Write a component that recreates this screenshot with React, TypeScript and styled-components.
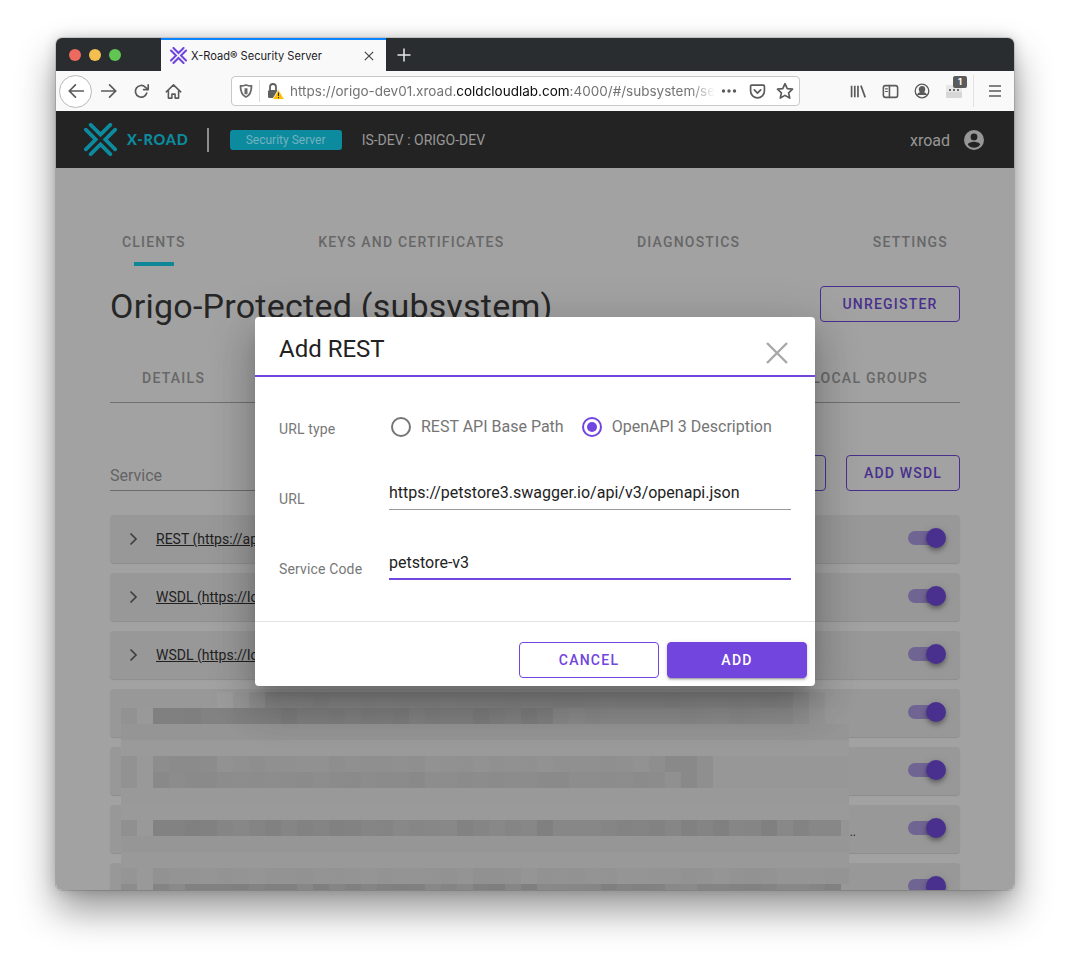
import React from "react";
import styled, { createGlobalStyle } from "styled-components";

const Global = createGlobalStyle`
  html, body { margin: 0; padding: 0; background: #fff; }
  * { box-sizing: border-box; }
  #root { font-family: Roboto, "Liberation Sans", sans-serif; }
`;

const Page = styled.div`
  width: 1070px;
  height: 964px;
  padding: 38px 56px 74px;
  background: #fff;
  overflow: hidden;
`;
const BrowserWindow = styled.div`
  width: 958px;
  height: 852px;
  display: flex;
  flex-direction: column;
  border-radius: 6px;
  overflow: hidden;
  box-shadow: 0 20px 38px rgba(0, 0, 0, 0.42), 0 0 14px rgba(0, 0, 0, 0.18), 0 0 0 1px rgba(0, 0, 0, 0.12);
`;
const TitleBar = styled.div`
  height: 33px;
  flex: none;
  display: flex;
  background: #2a2d30;
`;
const Lights = styled.div`
  width: 105px;
  display: flex;
  align-items: center;
  gap: 8px;
  padding-left: 13px;
`;
const Light = styled.span<{ $c: string }>`
  width: 12px;
  height: 12px;
  border-radius: 50%;
  background: ${(p) => p.$c};
`;
const BrowserTab = styled.div`
  width: 225px;
  display: flex;
  align-items: center;
  padding: 0 12px 0 9px;
  background: #f9f9fa;
  border-top: 2px solid #0a84ff;
  gap: 4px;
`;
const TabTitle = styled.span`
  flex: 1;
  font: 400 11.1px Inter, "Open Sans", sans-serif;
  color: #1c1c1e;
  white-space: nowrap;
`;
const NewTab = styled.div`
  width: 36px;
  display: flex;
  align-items: center;
  justify-content: center;
`;
const Toolbar = styled.div`
  height: 40px;
  flex: none;
  display: flex;
  align-items: center;
  padding-left: 3px;
  background: #f9f9fa;
`;
const BackButton = styled.div`
  width: 33px;
  height: 33px;
  margin-right: 1px;
  display: flex;
  align-items: center;
  justify-content: center;
  border: 1px solid #b9b9b9;
  border-radius: 50%;
  background: #fff;
`;
const Slot = styled.div`
  position: relative;
  width: 32px;
  height: 32px;
  display: flex;
  align-items: center;
  justify-content: center;
  flex: none;
`;
const UrlBar = styled.div`
  width: 569px;
  height: 30px;
  margin: 0 42px 0 42px;
  display: flex;
  align-items: center;
  background: #fff;
  border: 1px solid #c8c8c8;
  border-radius: 4px;
`;
const UrlDivider = styled.span`
  width: 1px;
  height: 22px;
  background: #dcdcdc;
`;
const UrlText = styled.div`
  width: 425px;
  white-space: nowrap;
  font: 400 13.5px Inter, "Open Sans", sans-serif;
  color: #737373;
  -webkit-mask-image: linear-gradient(to right, #000 94%, transparent 100%);
  mask-image: linear-gradient(to right, #000 94%, transparent 100%);
`;
const UrlHost = styled.span`
  color: #0c0c0d;
`;
const UrlIcons = styled.div`
  margin-left: auto;
  display: flex;
  align-items: center;
`;
const UrlIcon = styled.div<{ $w?: number }>`
  width: ${(p) => p.$w ?? 28}px;
  height: 28px;
  display: flex;
  align-items: center;
  justify-content: center;
`;
const ToolSep = styled.span`
  width: 1px;
  height: 32px;
  margin: 0 5px 0 3px;
  background: #e2e2e3;
`;
const Badge = styled.span`
  position: absolute;
  top: 1px;
  right: 3px;
  width: 14px;
  height: 12px;
  border-radius: 2px;
  background: #5b5b5c;
  color: #fff;
  font: 700 9px/12px Inter, sans-serif;
  text-align: center;
`;
const AppHeader = styled.div`
  height: 57px;
  flex: none;
  display: flex;
  align-items: center;
  padding: 0 29px 0 28px;
  background: #232323;
  color: #999;
`;
const Brand = styled.span`
  margin-left: 10px;
  font: 900 14.5px Lato, Inter, sans-serif;
  letter-spacing: 0.8px;
  color: #0c8a9e;
`;
const HeaderDivider = styled.span`
  width: 2px;
  height: 24px;
  margin: 0 21px 0 18px;
  background: #8e8e8e;
`;
const ServerBadge = styled.span`
  width: 112px;
  height: 20px;
  border-radius: 3px;
  background: #0c8a9e;
  color: #73b3bf;
  font-size: 12px;
  line-height: 20px;
  text-align: center;
`;
const Instance = styled.span`
  margin-left: 20px;
  font-size: 14px;
  color: #979797;
`;
const UserName = styled.span`
  margin-left: auto;
  margin-right: 13px;
  padding-top: 1px;
  font-size: 16px;
  color: #979797;
`;
const Content = styled.div`
  position: relative;
  flex: 1;
  min-height: 0;
  overflow: hidden;
  padding: 54px 54px 0;
  background: #fff;
`;
const TabRow = styled.div`
  display: flex;
  justify-content: space-between;
  padding: 0 12px 0 12px;
`;
const MainTab = styled.div<{ $active?: boolean }>`
  position: relative;
  height: 44px;
  font-size: 14px;
  font-weight: 500;
  line-height: 40px;
  letter-spacing: 1.2px;
  color: #9a9a9a;
  ${(p) =>
    p.$active &&
    `&::after { content: ""; position: absolute; left: 12px; bottom: 0; width: 40px; height: 4px; background: #00d0ee; }`}
`;
const TitleRow = styled.div`
  display: flex;
  justify-content: space-between;
  margin-top: 20px;
  height: 40px;
`;
const Title = styled.h1`
  margin: 0;
  font-size: 34px;
  font-weight: 400;
  line-height: 40px;
  letter-spacing: 0.25px;
  color: #2a2a2a;
`;
const OutlineButton = styled.button<{ $w: number }>`
  width: ${(p) => p.$w}px;
  height: 36px;
  padding: 0;
  border: 1px solid #663cdc;
  border-radius: 4px;
  background: transparent;
  color: #663cdc;
  font-family: inherit;
  font-size: 14px;
  font-weight: 500;
  letter-spacing: 1.2px;
`;
const SubTabs = styled.div`
  display: flex;
  justify-content: space-between;
  height: 49px;
  margin-top: 28px;
  padding: 0 32px;
  border-bottom: 1px solid #aaa;
`;
const SubTab = styled.div`
  font-size: 14px;
  font-weight: 500;
  line-height: 48px;
  letter-spacing: 1.25px;
  color: #9a9a9a;
`;
const FilterRow = styled.div`
  display: flex;
  align-items: flex-end;
  gap: 20px;
  margin-top: 52px;
`;
const Filter = styled.div`
  width: 260px;
  height: 36px;
  margin-right: auto;
  padding-top: 10px;
  border-bottom: 1px solid #a0a0a0;
  font-size: 16px;
  line-height: 22px;
  color: #939393;
`;
const Rows = styled.div`
  display: flex;
  flex-direction: column;
  gap: 10px;
  margin-top: 24px;
`;
const Row = styled.div`
  flex: none;
  height: 48px;
  display: flex;
  align-items: center;
  padding: 0 16px 0 19px;
  border-radius: 4px;
  background: #eee;
  box-shadow: 0 1px 1px rgba(0, 0, 0, 0.14);
`;
const RowLink = styled.span`
  margin-left: 18px;
  font-size: 14px;
  color: #222;
  text-decoration: underline;
  white-space: nowrap;
`;
const Ellipsis = styled.span`
  margin: 6px 52px 0 auto;
  font-size: 12px;
  color: #222;
`;
const Toggle = styled.span<{ $auto?: boolean }>`
  position: relative;
  width: 36px;
  height: 14px;
  margin-left: ${(p) => (p.$auto ? "auto" : "0")};
  margin-top: -2px;
  border-radius: 7px;
  background: rgba(102, 60, 220, 0.5);
`;
const Knob = styled.span`
  position: absolute;
  top: -3px;
  right: -2px;
  width: 20px;
  height: 20px;
  border-radius: 50%;
  background: #663cdc;
  box-shadow: 0 2px 4px -1px rgba(0, 0, 0, 0.3), 0 4px 5px rgba(0, 0, 0, 0.16), 0 1px 10px rgba(0, 0, 0, 0.14);
`;
const Scrim = styled.div`
  position: absolute;
  inset: 0;
  background: rgba(33, 33, 33, 0.42);
`;
const Mosaic = styled.svg`
  position: absolute;
  left: 65px;
  top: 524px;
`;
const Dialog = styled.div`
  position: absolute;
  left: 199px;
  top: 149px;
  width: 560px;
  height: 369px;
  border-radius: 4px;
  background: #fff;
  box-shadow: 0 11px 15px -7px rgba(0, 0, 0, 0.2), 0 24px 38px 3px rgba(0, 0, 0, 0.14), 0 9px 46px 8px rgba(0, 0, 0, 0.12);
`;
const DialogHead = styled.div`
  position: relative;
  height: 60px;
  padding: 0 24px;
  border-bottom: 2px solid #7145de;
  font-size: 24px;
  line-height: 64px;
  color: #222;
`;
const CloseSpot = styled.div`
  position: absolute;
  right: 26px;
  top: 24px;
  display: flex;
`;
const DialogBody = styled.div`
  height: 245px;
  padding: 17px 24px;
  border-bottom: 1px solid #e2e2e2;
`;
const FormRow = styled.div`
  display: grid;
  grid-template-columns: 110px 402px;
  height: 70px;
`;
const FormLabel = styled.div`
  font-size: 14px;
  line-height: 70px;
  letter-spacing: 0.15px;
  color: #777;
`;
const Radios = styled.div`
  height: 66px;
  display: flex;
  align-items: center;
  padding-left: 2px;
  gap: 18px;
`;
const RadioItem = styled.div`
  display: flex;
  align-items: center;
  gap: 10px;
  font-size: 16px;
  color: #757575;
`;
const RadioText = styled.span`
  margin-top: -2px;
`;
const RadioMark = styled.span<{ $on?: boolean }>`
  position: relative;
  width: 20px;
  height: 20px;
  border-radius: 50%;
  border: 2px solid ${(p) => (p.$on ? "#7145de" : "#757575")};
  ${(p) =>
    p.$on &&
    `&::after { content: ""; position: absolute; inset: 3px; border-radius: 50%; background: #7145de; }`}
`;
const FieldBox = styled.div<{ $focus?: boolean }>`
  height: 46px;
  display: flex;
  align-items: flex-end;
  padding-bottom: ${(p) => (p.$focus ? 3 : 4)}px;
  border-bottom: ${(p) => (p.$focus ? "2px solid #7145de" : "1px solid #999")};
  font-size: 16px;
  line-height: 24px;
  color: #222;
`;
const DialogFoot = styled.div`
  display: flex;
  justify-content: flex-end;
  gap: 8px;
  padding: 20px 8px 8px;
`;
const CancelButton = styled.button`
  width: 140px;
  height: 36px;
  padding: 0;
  border: 1px solid #7145de;
  border-radius: 4px;
  background: #fff;
  color: #7145de;
  font-family: inherit;
  font-size: 14px;
  font-weight: 500;
  letter-spacing: 1.25px;
`;
const AddButton = styled(CancelButton)`
  background: #7145de;
  color: #fff;
  box-shadow: 0 3px 1px -2px rgba(0, 0, 0, 0.2), 0 2px 2px rgba(0, 0, 0, 0.14), 0 1px 5px rgba(0, 0, 0, 0.12);
`;

const Logo = ({ size, color, w = 3.6 }: { size: number; color: string; w?: number }) => (
  <svg width={size} height={size} viewBox="0 0 32 32" fill="none" stroke={color} strokeWidth={w} strokeLinecap="round" strokeLinejoin="miter">
    <path d="M6.5 1.8 16 11.3 25.5 1.8" />
    <path d="M6.5 30.2 16 20.7 25.5 30.2" />
    <path d="M1.8 6.5 11.3 16 1.8 25.5" />
    <path d="M30.2 6.5 20.7 16 30.2 25.5" />
  </svg>
);

const Stroke = ({ children, c = "#5b5b5c", s = 16, w = 1.6 }: { children: React.ReactNode; c?: string; s?: number; w?: number }) => (
  <svg width={s} height={s} viewBox="0 0 16 16" fill="none" stroke={c} strokeWidth={w} strokeLinecap="round" strokeLinejoin="round">
    {children}
  </svg>
);

const Cross = ({ size, c, w }: { size: number; c: string; w: number }) => (
  <svg width={size} height={size} viewBox="0 0 24 24" fill="none" stroke={c} strokeWidth={w}>
    <path d="M2 2 22 22M22 2 2 22" />
  </svg>
);

type Cell = { x: number; y: number; f: string };
const ORIGIN_X = 121;
const gray = (v: number) => `rgb(${v},${v},${v})`;
const wob = (i: number, j: number, amp: number) => {
  const n = Math.sin(i * 12.9898 + j * 78.233) * 43758.5453;
  return Math.round((n - Math.floor(n) - 0.5) * amp);
};
// Each band: [end x, shade, jitter]; shade 0 leaves the row below visible
const bands: [number, number, number][][] = [
  [[217, 0, 0], [233, 156, 0], [249, 150, 0], [265, 143, 0], [793, 134, 1], [809, 141, 0], [825, 147, 0], [841, 152, 0]],
  [[137, 146, 0], [153, 153, 0], [553, 128, 3], [793, 139, 1], [809, 144, 0], [825, 149, 0], [841, 153, 0]],
  [[849, 149, 0]],
  [[849, 154, 0]],
  [[137, 146, 0], [153, 153, 0], [217, 141, 2], [665, 144, 2], [697, 137, 0], [713, 143, 0], [849, 151, 0]],
  [[137, 146, 0], [153, 153, 0], [665, 139, 2], [681, 144, 0], [697, 137, 0], [713, 143, 0], [849, 151, 0]],
  [[849, 153, 0]],
  [[849, 154, 0]],
  [[137, 144, 0], [153, 153, 0], [841, 132, 4], [849, 149, 0]],
  [[849, 150, 0]],
  [[849, 153, 0]],
  [[137, 149, 0], [153, 153, 0], [849, 147, 2]],
  [[137, 140, 0], [153, 153, 0], [841, 132, 6], [849, 152, 0]],
];
const cells: Cell[] = bands.flatMap((band, j) => {
  const out: Cell[] = [];
  let x = ORIGIN_X;
  let i = 0;
  for (const [end, shade, amp] of band) {
    while (x < end) {
      if (shade > 0) out.push({ x: x - ORIGIN_X, y: j * 16, f: gray(shade + wob(i, j, amp * 2)) });
      x += 16;
      i += 1;
    }
  }
  return out;
});

const rowLabels = ["REST (https://api.example.org/rest)", "WSDL (https://localhost/service.wsdl)", "WSDL (https://localhost/other.wsdl)"];

export default function App() {
  return (
    <Page>
      <Global />
      <BrowserWindow>
        <TitleBar>
          <Lights>
            <Light $c="#ed6a5e" />
            <Light $c="#f5bf4f" />
            <Light $c="#61c554" />
          </Lights>
          <BrowserTab>
            <Logo size={17} color="#6d44dc" w={3.8} />
            <TabTitle>X-Road® Security Server</TabTitle>
            <Cross size={10} c="#4a4a4f" w={3} />
          </BrowserTab>
          <NewTab>
            <Stroke c="#e8e8e8" s={16} w={1.5}>
              <path d="M8 1.5v13M1.5 8h13" strokeLinecap="butt" />
            </Stroke>
          </NewTab>
        </TitleBar>
        <Toolbar>
          <BackButton>
            <Stroke s={18} w={1.5}>
              <path d="M14.5 8H2M7.5 2.5 2 8l5.5 5.5" />
            </Stroke>
          </BackButton>
          <Slot>
            <Stroke s={18} w={1.5}>
              <path d="M1.5 8H14M8.5 2.5 14 8l-5.5 5.5" />
            </Stroke>
          </Slot>
          <Slot>
            <Stroke s={17} w={1.6}>
              <path d="M13 9.5A5.5 5.5 0 1 1 11.5 3.8L14 6" />
              <path d="M14.3 1.8V6.2H10" />
            </Stroke>
          </Slot>
          <Slot>
            <Stroke s={17} w={1.5}>
              <path d="M1.2 8.3 8 1.8l6.8 6.5M3.2 7v7.2h3.3V10.5h3v3.7h3.3V7" />
            </Stroke>
          </Slot>
          <UrlBar>
            <UrlIcon>
              <Stroke s={16} w={1.8} c="#6a6a6b">
                <path d="M8 2c1.8.8 3.8 1 5.5 1 0 5-1 9-5.5 11C3.500 12 2.500 8 2.500 3 4.200 3 6.200 2.800 8 2Z" />
                <path d="M8 5.200v6" strokeWidth={3} strokeLinecap="butt" />
              </Stroke>
            </UrlIcon>
            <UrlDivider />
            <UrlIcon $w={31}>
              <svg width="20" height="20" viewBox="0 0 20 20">
                <path d="M5 9V6a3 3 0 0 1 6 0v3" fill="none" stroke="#5f5f60" strokeWidth="1.800" />
                <rect x="3" y="9" width="10" height="8" rx="1.500" fill="#5f5f60" />
                <path d="M13.500 8.500 19.500 18.500H7.500Z" fill="#ffbf00" stroke="#fff" strokeWidth=".8" />
                <path d="M13.500 11.500v3.500M13.500 16v1.200" stroke="#2a2a2a" strokeWidth="1.100" />
              </svg>
            </UrlIcon>
            <UrlText>
              https://origo-dev01.xroad.<UrlHost>coldcloudlab.com</UrlHost>:4000/#/subsystem/se
            </UrlText>
            <UrlIcons>
              <UrlIcon>
                <svg width="16" height="16" viewBox="0 0 16 16" fill="#5b5b5c">
                  <circle cx="2.500" cy="8" r="1.700" />
                  <circle cx="8" cy="8" r="1.700" />
                  <circle cx="13.500" cy="8" r="1.700" />
                </svg>
              </UrlIcon>
              <UrlIcon>
                <Stroke s={17} w={1.6}>
                  <path d="M2.500 2h11a1 1 0 0 1 1 1v4.500a6.500 6.500 0 0 1-13 0V3a1 1 0 0 1 1-1Z" />
                  <path d="M5 6.500l3 3 3-3" />
                </Stroke>
              </UrlIcon>
              <UrlIcon>
                <Stroke s={18} w={1.5}>
                  <path d="M8 1.500 10 5.900l4.700.5-3.500 3.200 1 4.700L8 11.900l-4.200 2.400 1-4.700L1.300 6.400 6 5.900Z" />
                </Stroke>
              </UrlIcon>
            </UrlIcons>
          </UrlBar>
          <Slot>
            <Stroke s={17} w={1.6}>
              <path d="M1.500 2.500v11M4.500 2.500v11M7.500 2.500v11M10.300 2.500l4 11" strokeLinecap="butt" />
            </Stroke>
          </Slot>
          <Slot>
            <Stroke s={17} w={1.5}>
              <rect x="1.300" y="2.500" width="13.400" height="11" rx="2" />
              <path d="M7 2.500v11" />
              <path d="M3.300 5.500h1.800M3.300 8h1.800" strokeWidth="1.100" />
            </Stroke>
          </Slot>
          <Slot>
            <Stroke s={16} w={1.3}>
              <circle cx="8" cy="8" r="6.800" />
              <circle cx="8" cy="6.300" r="2.600" fill="#5b5b5c" />
              <path d="M3.600 12c1-2 2.500-2.600 4.400-2.600s3.400.6 4.400 2.600" fill="#5b5b5c" />
            </Stroke>
          </Slot>
          <Slot>
            <svg width="16" height="16" viewBox="0 0 16 16">
              <rect x="0" y="2" width="16" height="13" rx="1" fill="#d7d7d7" />
              <rect x="0" y="2" width="16" height="7" fill="#e8e8e8" />
              <circle cx="4" cy="7" r="1.100" fill="#4b4b4b" />
              <circle cx="8" cy="7" r="1.100" fill="#4b4b4b" />
              <circle cx="12" cy="7" r="1.100" fill="#4b4b4b" />
            </svg>
            <Badge>1</Badge>
          </Slot>
          <ToolSep />
          <Slot>
            <Stroke s={16} w={1.6}>
              <path d="M2 3h12M2 8h12M2 13h12" strokeLinecap="butt" />
            </Stroke>
          </Slot>
        </Toolbar>
        <AppHeader>
          <Logo size={33} color="#0c8a9e" w={3.7} />
          <Brand>X-ROAD</Brand>
          <HeaderDivider />
          <ServerBadge>Security Server</ServerBadge>
          <Instance>IS-DEV : ORIGO-DEV</Instance>
          <UserName>xroad</UserName>
          <svg width="22" height="22" viewBox="0 0 22 22" fill="#979797">
            <path d="M11 1a10 10 0 1 0 0 20 10 10 0 0 0 0-20Zm0 3.500a3.400 3.400 0 1 1 0 6.800 3.400 3.400 0 0 1 0-6.800Zm0 14.200a7.700 7.700 0 0 1-6.200-3.200c.6-1.700 4.100-2.700 6.200-2.700s5.600 1 6.200 2.700A7.700 7.700 0 0 1 11 18.700Z" />
          </svg>
        </AppHeader>
        <Content>
          <TabRow>
            <MainTab $active>CLIENTS</MainTab>
            <MainTab>KEYS AND CERTIFICATES</MainTab>
            <MainTab>DIAGNOSTICS</MainTab>
            <MainTab>SETTINGS</MainTab>
          </TabRow>
          <TitleRow>
            <Title>Origo-Protected (subsystem)</Title>
            <OutlineButton $w={140}>UNREGISTER</OutlineButton>
          </TitleRow>
          <SubTabs>
            <SubTab>DETAILS</SubTab>
            <SubTab>LOCAL GROUPS</SubTab>
          </SubTabs>
          <FilterRow>
            <Filter>Service</Filter>
            <OutlineButton $w={110}>ADD REST</OutlineButton>
            <OutlineButton $w={114}>ADD WSDL</OutlineButton>
          </FilterRow>
          <Rows>
            {rowLabels.map((label) => (
              <Row key={label}>
                <svg width="9" height="14" viewBox="0 0 9 14" fill="none" stroke="#555" strokeWidth="1.700">
                  <path d="M1.500 1.500 7 7l-5.500 5.500" />
                </svg>
                <RowLink>{label}</RowLink>
                <Toggle $auto>
                  <Knob />
                </Toggle>
              </Row>
            ))}
            {[0, 1, 2, 3].map((i) => (
              <Row key={i}>
                {i === 2 && <Ellipsis>..</Ellipsis>}
                <Toggle $auto={i !== 2}>
                  <Knob />
                </Toggle>
              </Row>
            ))}
          </Rows>
          <Scrim />
          <Mosaic width="728" height="198" viewBox="0 0 728 198" shapeRendering="crispEdges">
            {cells.map((c) => (
              <rect key={`${c.x}-${c.y}`} x={c.x} y={c.y} width="16" height="16" fill={c.f} />
            ))}
          </Mosaic>
          <Dialog>
            <DialogHead>
              Add REST
              <CloseSpot>
                <Cross size={24} c="#a8a8a8" w={2.4} />
              </CloseSpot>
            </DialogHead>
            <DialogBody>
              <FormRow>
                <FormLabel>URL type</FormLabel>
                <Radios>
                  <RadioItem>
                    <RadioMark />
                    <RadioText>REST API Base Path</RadioText>
                  </RadioItem>
                  <RadioItem>
                    <RadioMark $on />
                    <RadioText>OpenAPI 3 Description</RadioText>
                  </RadioItem>
                </Radios>
              </FormRow>
              <FormRow>
                <FormLabel>URL</FormLabel>
                <FieldBox>https://petstore3.swagger.io/api/v3/openapi.json</FieldBox>
              </FormRow>
              <FormRow>
                <FormLabel>Service Code</FormLabel>
                <FieldBox $focus>petstore-v3</FieldBox>
              </FormRow>
            </DialogBody>
            <DialogFoot>
              <CancelButton>CANCEL</CancelButton>
              <AddButton>ADD</AddButton>
            </DialogFoot>
          </Dialog>
        </Content>
      </BrowserWindow>
    </Page>
  );
}
